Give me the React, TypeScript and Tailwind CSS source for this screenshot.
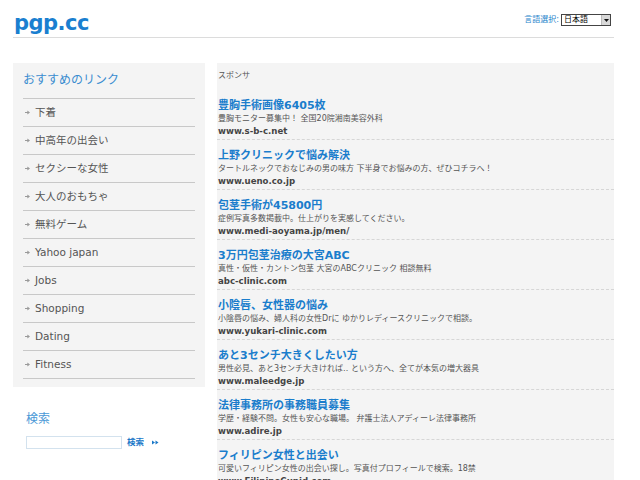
const links = [
  "下着",
  "中高年の出会い",
  "セクシーな女性",
  "大人のおもちゃ",
  "無料ゲーム",
  "Yahoo japan",
  "Jobs",
  "Shopping",
  "Dating",
  "Fitness",
];

const ads = [
  { title: "豊胸手術画像6405枚", desc: "豊胸モニター募集中！ 全国20院湘南美容外科", url: "www.s-b-c.net" },
  { title: "上野クリニックで悩み解決", desc: "タートルネックでおなじみの男の味方 下半身でお悩みの方、ぜひコチラへ！", url: "www.ueno.co.jp" },
  { title: "包茎手術が45800円", desc: "症例写真多数掲載中。仕上がりを実感してください。", url: "www.medi-aoyama.jp/men/" },
  { title: "3万円包茎治療の大宮ABC", desc: "真性・仮性・カントン包茎 大宮のABCクリニック 相談無料", url: "abc-clinic.com" },
  { title: "小陰唇、女性器の悩み", desc: "小陰唇の悩み、婦人科の女性Drに ゆかりレディースクリニックで相談。", url: "www.yukari-clinic.com" },
  { title: "あと3センチ大きくしたい方", desc: "男性必見、あと3センチ大きければ‥ という方へ、全てが本気の増大器具", url: "www.maleedge.jp" },
  { title: "法律事務所の事務職員募集", desc: "学歴・経験不問。女性も安心な職場。 弁護士法人アディーレ法律事務所", url: "www.adire.jp" },
  { title: "フィリピン女性と出会い", desc: "可愛いフィリピン女性の出会い探し。写真付プロフィールで検索。18禁", url: "www.FilipinoCupid.com" },
];

function Bullet() {
  return (
    <svg width="5" height="5" viewBox="0 0 5 5" className="shrink-0">
      <path d="M0 2.5h3" stroke="#9a9a9a" strokeWidth="1" />
      <path d="M2.3 0.5L5 2.5L2.3 4.5z" fill="#9a9a9a" />
    </svg>
  );
}

export default function App() {
  return (
    <div
      className="h-[480px] overflow-hidden bg-white"
      style={{ fontFamily: '"DejaVu Sans", "Noto Sans CJK JP", sans-serif' }}
    >
      <div className="ml-[13px] w-[601px]">
        {/* header */}
        <div className="flex h-[38px] items-start justify-between border-b border-[#dcdcdc]">
          <div className="pl-[1px] pt-[11px] text-[21px] font-bold leading-[24px] tracking-[-0.5px] text-[#1a7fd0]">
            pgp.cc
          </div>
          <div className="flex items-center gap-[2px] pr-[3px] pt-[14px]">
            <span className="text-[8px] text-[#2a86cc]">言語選択:</span>
            <div className="flex h-[12px] w-[50px] items-center border border-[#444] bg-white">
              <span className="flex-1 pl-[2px] text-[8px] leading-[10px] text-black">日本語</span>
              <span className="flex h-[10px] w-[9px] items-center justify-center border-l border-[#bbb] bg-[#d8d8d8]">
                <svg width="5" height="3" viewBox="0 0 5 3">
                  <path d="M0 0h5L2.5 3z" fill="#111" />
                </svg>
              </span>
            </div>
          </div>
        </div>

        <div className="mt-[25px] flex gap-[12px]">
          {/* left column */}
          <div className="w-[192px] shrink-0">
            <div className="bg-[#f4f4f4] px-[10px] pb-[8px]">
              <div className="border-b border-[#c8c8c8] pb-[9px] pt-[9px] text-[12px] leading-[17px] text-[#3a8dd0]">
                おすすめのリンク
              </div>
              {links.map((l) => (
                <div
                  key={l}
                  className="flex h-[28px] items-center gap-[5px] border-b border-[#c8c8c8] pl-[2px] text-[10.5px] text-[#555]"
                >
                  <Bullet />
                  <span>{l}</span>
                </div>
              ))}
            </div>
            <div className="pl-[13px] pt-[25px]">
              <div className="text-[12px] leading-[14px] text-[#4a98d6]">検索</div>
              <div className="mt-[10px] flex items-center">
                <div className="h-[13px] w-[96px] border border-[#d3e2ee] bg-white" />
                <span className="ml-[5px] text-[8.5px] font-bold text-[#1a78c8]">検索</span>
                <svg width="7" height="5" viewBox="0 0 7 5" className="ml-[8px]">
                  <path d="M0 0.5L3 2.5L0 4.5z" fill="#1a78c8" />
                  <path d="M3.5 0.5L6.5 2.5L3.5 4.5z" fill="#1a78c8" />
                </svg>
              </div>
            </div>
          </div>

          {/* right column */}
          <div className="w-[397px] bg-[#f4f4f4]">
            <div className="h-[27px] pl-[1px] pt-[8px] text-[8px] leading-[10px] text-[#555]">スポンサ</div>
            {ads.map((a) => (
              <div key={a.url} className="border-b border-dashed border-[#d6d6d6] pb-[1px] pl-[1px] pt-[9px]">
                <div className="text-[11px] font-bold leading-[14px] text-[#1a7dcc]">{a.title}</div>
                <div className="text-[8px] leading-[12px] text-[#555]">{a.desc}</div>
                <div className="text-[8.6px] font-bold leading-[13px] text-[#444]">{a.url}</div>
              </div>
            ))}
          </div>
        </div>
      </div>
    </div>
  );
}
